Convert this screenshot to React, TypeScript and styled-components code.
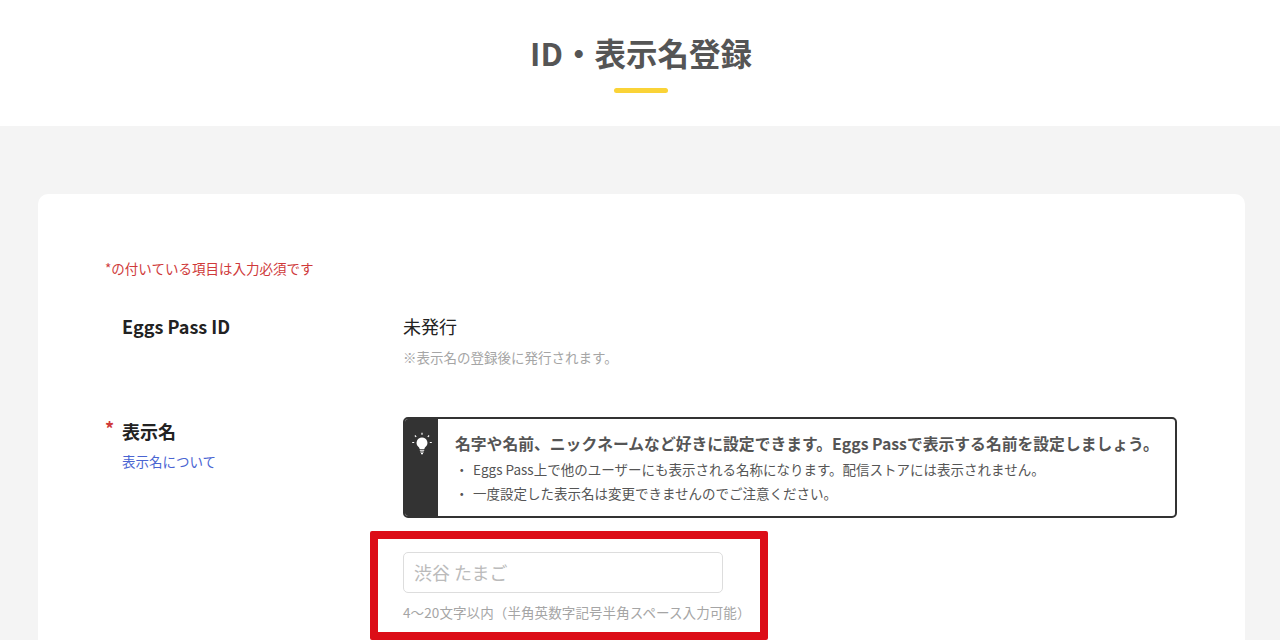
import styled, { createGlobalStyle } from "styled-components";

const GlobalStyle = createGlobalStyle`
  html, body {
    margin: 0;
    padding: 0;
    height: 640px;
    overflow: hidden;
    background: #f4f4f4;
    font-family: "Noto Sans CJK JP", "Noto Sans", sans-serif;
  }
  * {
    box-sizing: border-box;
  }
`;

const PageHeader = styled.header`
  height: 126px;
  background: #fff;
  display: flex;
  flex-direction: column;
  align-items: center;
  padding: 29px 0 0 2px;
`;

const Title = styled.h1`
  margin: 0;
  font-size: 31.5px;
  line-height: 46px;
  font-weight: 700;
  color: #555;
`;

const TitleBar = styled.div`
  width: 54px;
  height: 5px;
  margin-top: 13px;
  border-radius: 3px;
  background: #fad337;
`;

const Main = styled.main`
  padding: 68px 35px 0 38px;
`;

const Card = styled.section`
  background: #fff;
  border-radius: 10px 10px 0 0;
  padding: 65px 68px 0 67px;
`;

const RequiredNote = styled.p`
  margin: 0 0 35px;
  font-size: 13.5px;
  line-height: 19px;
  color: #cf3a3a;
`;

const FormRow = styled.div<{ $gap?: number }>`
  display: grid;
  grid-template-columns: 281px 1fr;
  column-gap: 17px;
  margin-bottom: ${(p) => p.$gap || 0}px;
`;

const LabelCol = styled.div`
  position: relative;
  padding-left: 17px;
`;

const Label = styled.div<{ $offset?: number }>`
  margin-top: ${(p) => p.$offset || 0}px;
  font-size: 18px;
  line-height: 26px;
  font-weight: 700;
  color: #222;
`;

const Asterisk = styled.span`
  position: absolute;
  left: 0;
  top: 0;
  font-size: 18px;
  line-height: 22px;
  font-weight: 700;
  color: #cf3a3a;
`;

const HelpLink = styled.a`
  display: block;
  margin-top: 8px;
  font-size: 13.5px;
  line-height: 19px;
  color: #4a64d2;
  text-decoration: none;
`;

const Value = styled.div`
  font-size: 18px;
  line-height: 26px;
  color: #222;
`;

const SubNote = styled.div`
  margin-top: 9px;
  font-size: 13.5px;
  line-height: 19px;
  color: #a5a5a5;
`;

const InfoBox = styled.div`
  display: flex;
  height: 101px;
  border: 2px solid #333;
  border-radius: 5px;
  overflow: hidden;
`;

const InfoIcon = styled.div`
  flex: 0 0 33px;
  background: #333;
  display: flex;
  justify-content: center;
  align-items: flex-start;
  padding-top: 13px;
`;

const InfoBody = styled.div`
  padding: 13px 0 0 17px;
`;

const InfoTitle = styled.div`
  font-size: 15.8px;
  line-height: 24px;
  font-weight: 700;
  color: #555;
`;

const InfoList = styled.ul`
  margin: 1px 0 0;
  padding: 0;
  list-style: none;
`;

const InfoItem = styled.li`
  display: flex;
  font-size: 13.5px;
  line-height: 24px;
  color: #555;
`;

const Dot = styled.span`
  flex: 0 0 18px;
`;

const Highlight = styled.div`
  width: 398px;
  height: 109px;
  margin: 13px 0 0 -33px;
  padding: 13px 0 0 25px;
  border: 8px solid #dc0d17;
  border-radius: 2px;
`;

const NameInput = styled.input`
  display: block;
  width: 320px;
  height: 41px;
  padding: 0 10px 2px;
  border: 1.5px solid #ddd;
  border-radius: 5px;
  outline: none;
  font-family: inherit;
  font-size: 18px;
  color: #333;
  &::placeholder {
    color: #bbb;
  }
`;

const Hint = styled.div`
  margin-top: 9px;
  font-size: 13.5px;
  line-height: 20px;
  letter-spacing: 0.1px;
  color: #a5a5a5;
  white-space: nowrap;
`;

const BulbIcon = () => (
  <svg width="22" height="24" viewBox="0 0 22 24" fill="none">
    <path
      d="M11 5.5a5.4 5.4 0 0 0-3.4 9.6c.7.6 1 1.2 1 2h4.8c0-.8.3-1.4 1-2A5.4 5.4 0 0 0 11 5.500Z"
      fill="#fff"
    />
    <path d="M8.800 18.300h4.400M9.300 20h3.400M10 21.600h2" stroke="#fff" strokeWidth="1.100" />
    <path
      d="M11 .8v2M3.900 3.500l1.300 1.300M18.100 3.500l-1.300 1.300M1.200 10.500h2M18.800 10.500h2"
      stroke="#fff"
      strokeWidth="1.200"
    />
  </svg>
);

const App = () => {
  return (
    <>
      <GlobalStyle />
      <PageHeader>
        <Title>ID・表示名登録</Title>
        <TitleBar />
      </PageHeader>
      <Main>
        <Card>
          <RequiredNote>*の付いている項目は入力必須です</RequiredNote>
          <FormRow $gap={50}>
            <LabelCol>
              <Label>Eggs Pass ID</Label>
            </LabelCol>
            <div>
              <Value>未発行</Value>
              <SubNote>※表示名の登録後に発行されます。</SubNote>
            </div>
          </FormRow>
          <FormRow>
            <LabelCol>
              <Asterisk>*</Asterisk>
              <Label $offset={1}>表示名</Label>
              <HelpLink href="#">表示名について</HelpLink>
            </LabelCol>
            <div>
              <InfoBox>
                <InfoIcon>
                  <BulbIcon />
                </InfoIcon>
                <InfoBody>
                  <InfoTitle>
                    名字や名前、ニックネームなど好きに設定できます。Eggs Passで表示する名前を設定しましょう。
                  </InfoTitle>
                  <InfoList>
                    <InfoItem>
                      <Dot>・</Dot>
                      Eggs Pass上で他のユーザーにも表示される名称になります。配信ストアには表示されません。
                    </InfoItem>
                    <InfoItem>
                      <Dot>・</Dot>
                      一度設定した表示名は変更できませんのでご注意ください。
                    </InfoItem>
                  </InfoList>
                </InfoBody>
              </InfoBox>
              <Highlight>
                <NameInput placeholder="渋谷 たまご" />
                <Hint>4～20文字以内（半角英数字記号半角スペース入力可能）</Hint>
              </Highlight>
            </div>
          </FormRow>
        </Card>
      </Main>
    </>
  );
};

export default App;
